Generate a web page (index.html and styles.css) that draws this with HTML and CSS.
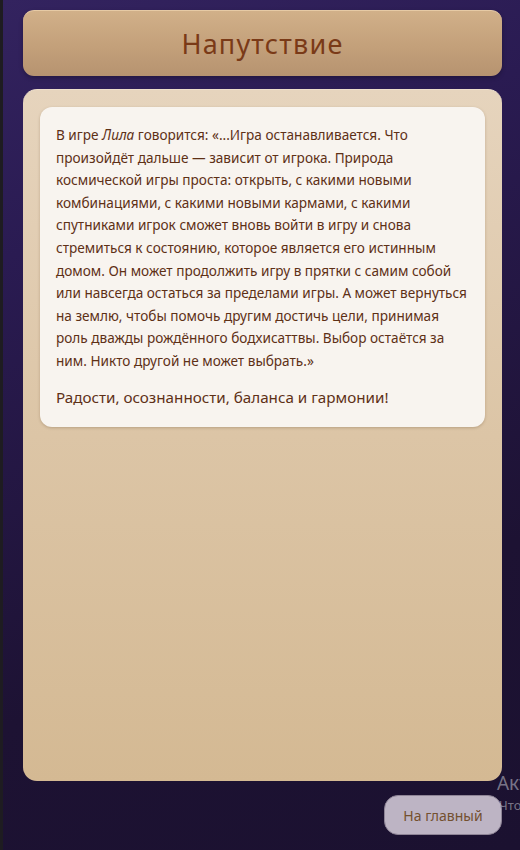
FILE: index.html
```html
<!DOCTYPE html>
<html lang="ru">
<head>
<meta charset="utf-8">
<title>Напутствие</title>
<link rel="stylesheet" href="styles.css">
</head>
<body>
<div class="page">
  <header class="title-box">
    <h1 class="title">Напутствие</h1>
  </header>
  <main class="card">
    <section class="quote">
      <p class="quote-text">В игре <em>Лила</em> говорится: «...Игра останавливается. Что произойдёт дальше — зависит от игрока. Природа космической игры проста: открыть, с какими новыми комбинациями, с какими новыми кармами, с какими спутниками игрок сможет вновь войти в игру и снова стремиться к состоянию, которое является его истинным домом. Он может продолжить игру в прятки с самим собой или навсегда остаться за пределами игры. А может вернуться на землю, чтобы помочь другим достичь цели, принимая роль дважды рождённого бодхисаттвы. Выбор остаётся за ним. Никто другой не может выбрать.»</p>
      <p class="wish">Радости, осознанности, баланса и гармонии!</p>
    </section>
  </main>
  <div class="actions">
    <button class="home-btn" type="button">На главный</button>
  </div>
</div>
<div class="watermark">
  <div class="wm-title">Активация Windows</div>
  <div class="wm-sub">Чтобы активировать Windows, перейдите в раздел «Параметры».</div>
</div>
</body>
</html>
```

FILE: styles.css
```css
html, body {
  margin: 0;
  padding: 0;
  height: 100%;
}
body {
  background: linear-gradient(160deg, #33235f 0%, #2a1b52 25%, #1d1233 70%, #1b1130 100%);
  border-left: 3px solid #1e1c21;
  box-sizing: border-box;
  font-family: "Noto Sans", "Open Sans", sans-serif;
  overflow: hidden;
  position: relative;
}
.page {
  width: 479px;
  margin-left: 20px;
  padding-top: 10px;
  display: flex;
  flex-direction: column;
}
.title-box {
  height: 66px;
  box-sizing: border-box;
  border-radius: 11px;
  background: linear-gradient(180deg, #d1b089 0%, #c3a07a 55%, #b69370 100%);
  border-top: 1px solid #e6caa5;
  box-shadow: 0 2px 4px rgba(0,0,0,0.25);
  display: flex;
  align-items: center;
  justify-content: center;
}
.title {
  margin: 0;
  font-weight: 400;
  font-size: 27px;
  letter-spacing: 1.2px;
  color: #7a3a17;
}
.card {
  margin-top: 13px;
  height: 692px;
  box-sizing: border-box;
  border-radius: 14px;
  background: linear-gradient(180deg, #e6d4bd 0%, #dcc5a6 50%, #d4b993 100%);
  border-top: 1px solid #eedfcb;
  padding: 17px 17px;
}
.quote {
  background: #f8f4ef;
  border-radius: 12px;
  padding: 17px 16px 18px 16px;
  box-shadow: 0 1px 3px rgba(80,50,20,0.25);
}
.quote-text {
  margin: 0;
  font-size: 13.6px;
  line-height: 22.6px;
  color: #5e3016;
}
.quote-text em {
  font-style: italic;
}
.wish {
  margin: 12px 0 0 0;
  font-size: 15.2px;
  line-height: 24px;
  color: #5e3016;
}
.actions {
  display: flex;
  justify-content: flex-end;
  margin-top: 14px;
}
.home-btn {
  width: 118px;
  height: 40px;
  border: 1px solid #8e8496;
  border-radius: 14px;
  background: #bdb4c4;
  color: #74502f;
  font-family: "Noto Sans", "Open Sans", sans-serif;
  font-size: 14px;
  padding: 0;
}
.watermark {
  position: absolute;
  left: 494px;
  top: 770px;
  white-space: nowrap;
  color: rgba(200,200,210,0.55);
  pointer-events: none;
}
.wm-title {
  font-size: 19px;
  line-height: 26px;
}
.wm-sub {
  font-size: 13px;
  line-height: 18px;
  margin-left: 2px;
}
```
